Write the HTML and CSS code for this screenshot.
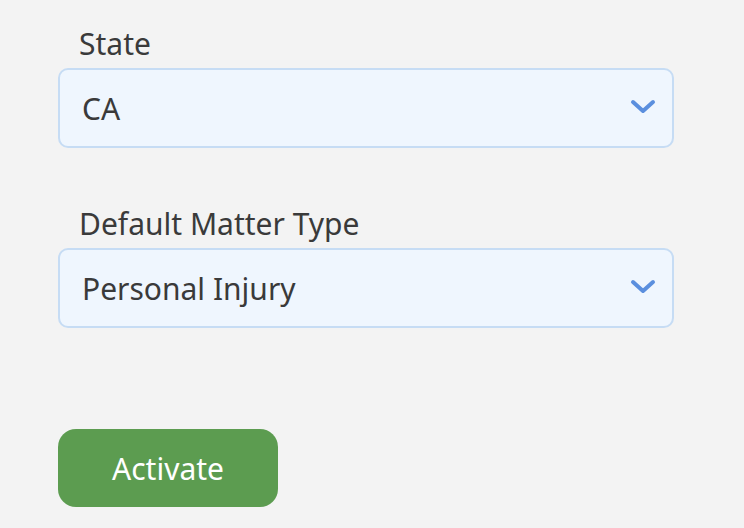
FILE: index.html
```html
<!DOCTYPE html>
<html lang="en">
<head>
    <meta charset="UTF-8">
    <meta name="viewport" content="width=device-width, initial-scale=1.0">
    <title>Activate Account</title>
    <link rel="stylesheet" href="styles.css">
</head>
<body>
    <form class="settings-form" id="activateForm">
        <div class="form-group">
            <label for="state">State</label>
            <div class="select-wrap">
                <select id="state">
                    <option value="CA">CA</option>
                    <option value="NY">NY</option>
                    <option value="TX">TX</option>
                </select>
                <svg class="chevron" width="26" height="16" viewBox="0 0 26 16">
                    <path d="M3 3 L13 12 L23 3" fill="none" stroke="#5b8fde" stroke-width="4" stroke-linecap="round" stroke-linejoin="round"/>
                </svg>
            </div>
        </div>

        <div class="form-group">
            <label for="matter_type">Default Matter Type</label>
            <div class="select-wrap">
                <select id="matter_type">
                    <option value="personal_injury">Personal Injury</option>
                    <option value="family">Family Law</option>
                    <option value="estate">Estate Planning</option>
                </select>
                <svg class="chevron" width="26" height="16" viewBox="0 0 26 16">
                    <path d="M3 3 L13 12 L23 3" fill="none" stroke="#5b8fde" stroke-width="4" stroke-linecap="round" stroke-linejoin="round"/>
                </svg>
            </div>
        </div>

        <button type="submit" class="btn-activate">Activate</button>
    </form>
</body>
</html>
```

FILE: styles.css
```css
/* Basic Reset */
* {
    margin: 0;
    padding: 0;
    box-sizing: border-box;
    font-family: "Noto Sans", "Open Sans", sans-serif;
}

body {
    background-color: #f3f3f3;
    color: #3a3a3a;
}

.settings-form {
    display: flex;
    flex-direction: column;
    align-items: flex-start;
    padding: 26px 70px 0 58px;
}

.form-group {
    width: 100%;
    margin-bottom: 58px;
}

label {
    display: block;
    font-size: 30px;
    line-height: 36px;
    padding-left: 21px;
    margin-bottom: 6px;
}

.select-wrap {
    position: relative;
}

select {
    appearance: none;
    -webkit-appearance: none;
    width: 100%;
    height: 80px;
    padding: 0 60px 0 22px;
    font-size: 30px;
    color: #3a3a3a;
    background: #eff6fe;
    border: 2px solid #c6dcf4;
    border-radius: 10px;
    outline: none;
}

.chevron {
    position: absolute;
    right: 18px;
    top: 31px;
    pointer-events: none;
}

.btn-activate {
    margin-top: 43px;
    width: 220px;
    height: 78px;
    background: #5c9c50;
    color: white;
    font-size: 30px;
    border: none;
    border-radius: 18px;
    cursor: pointer;
}

.btn-activate:hover {
    background: #4f8a44;
}
```
